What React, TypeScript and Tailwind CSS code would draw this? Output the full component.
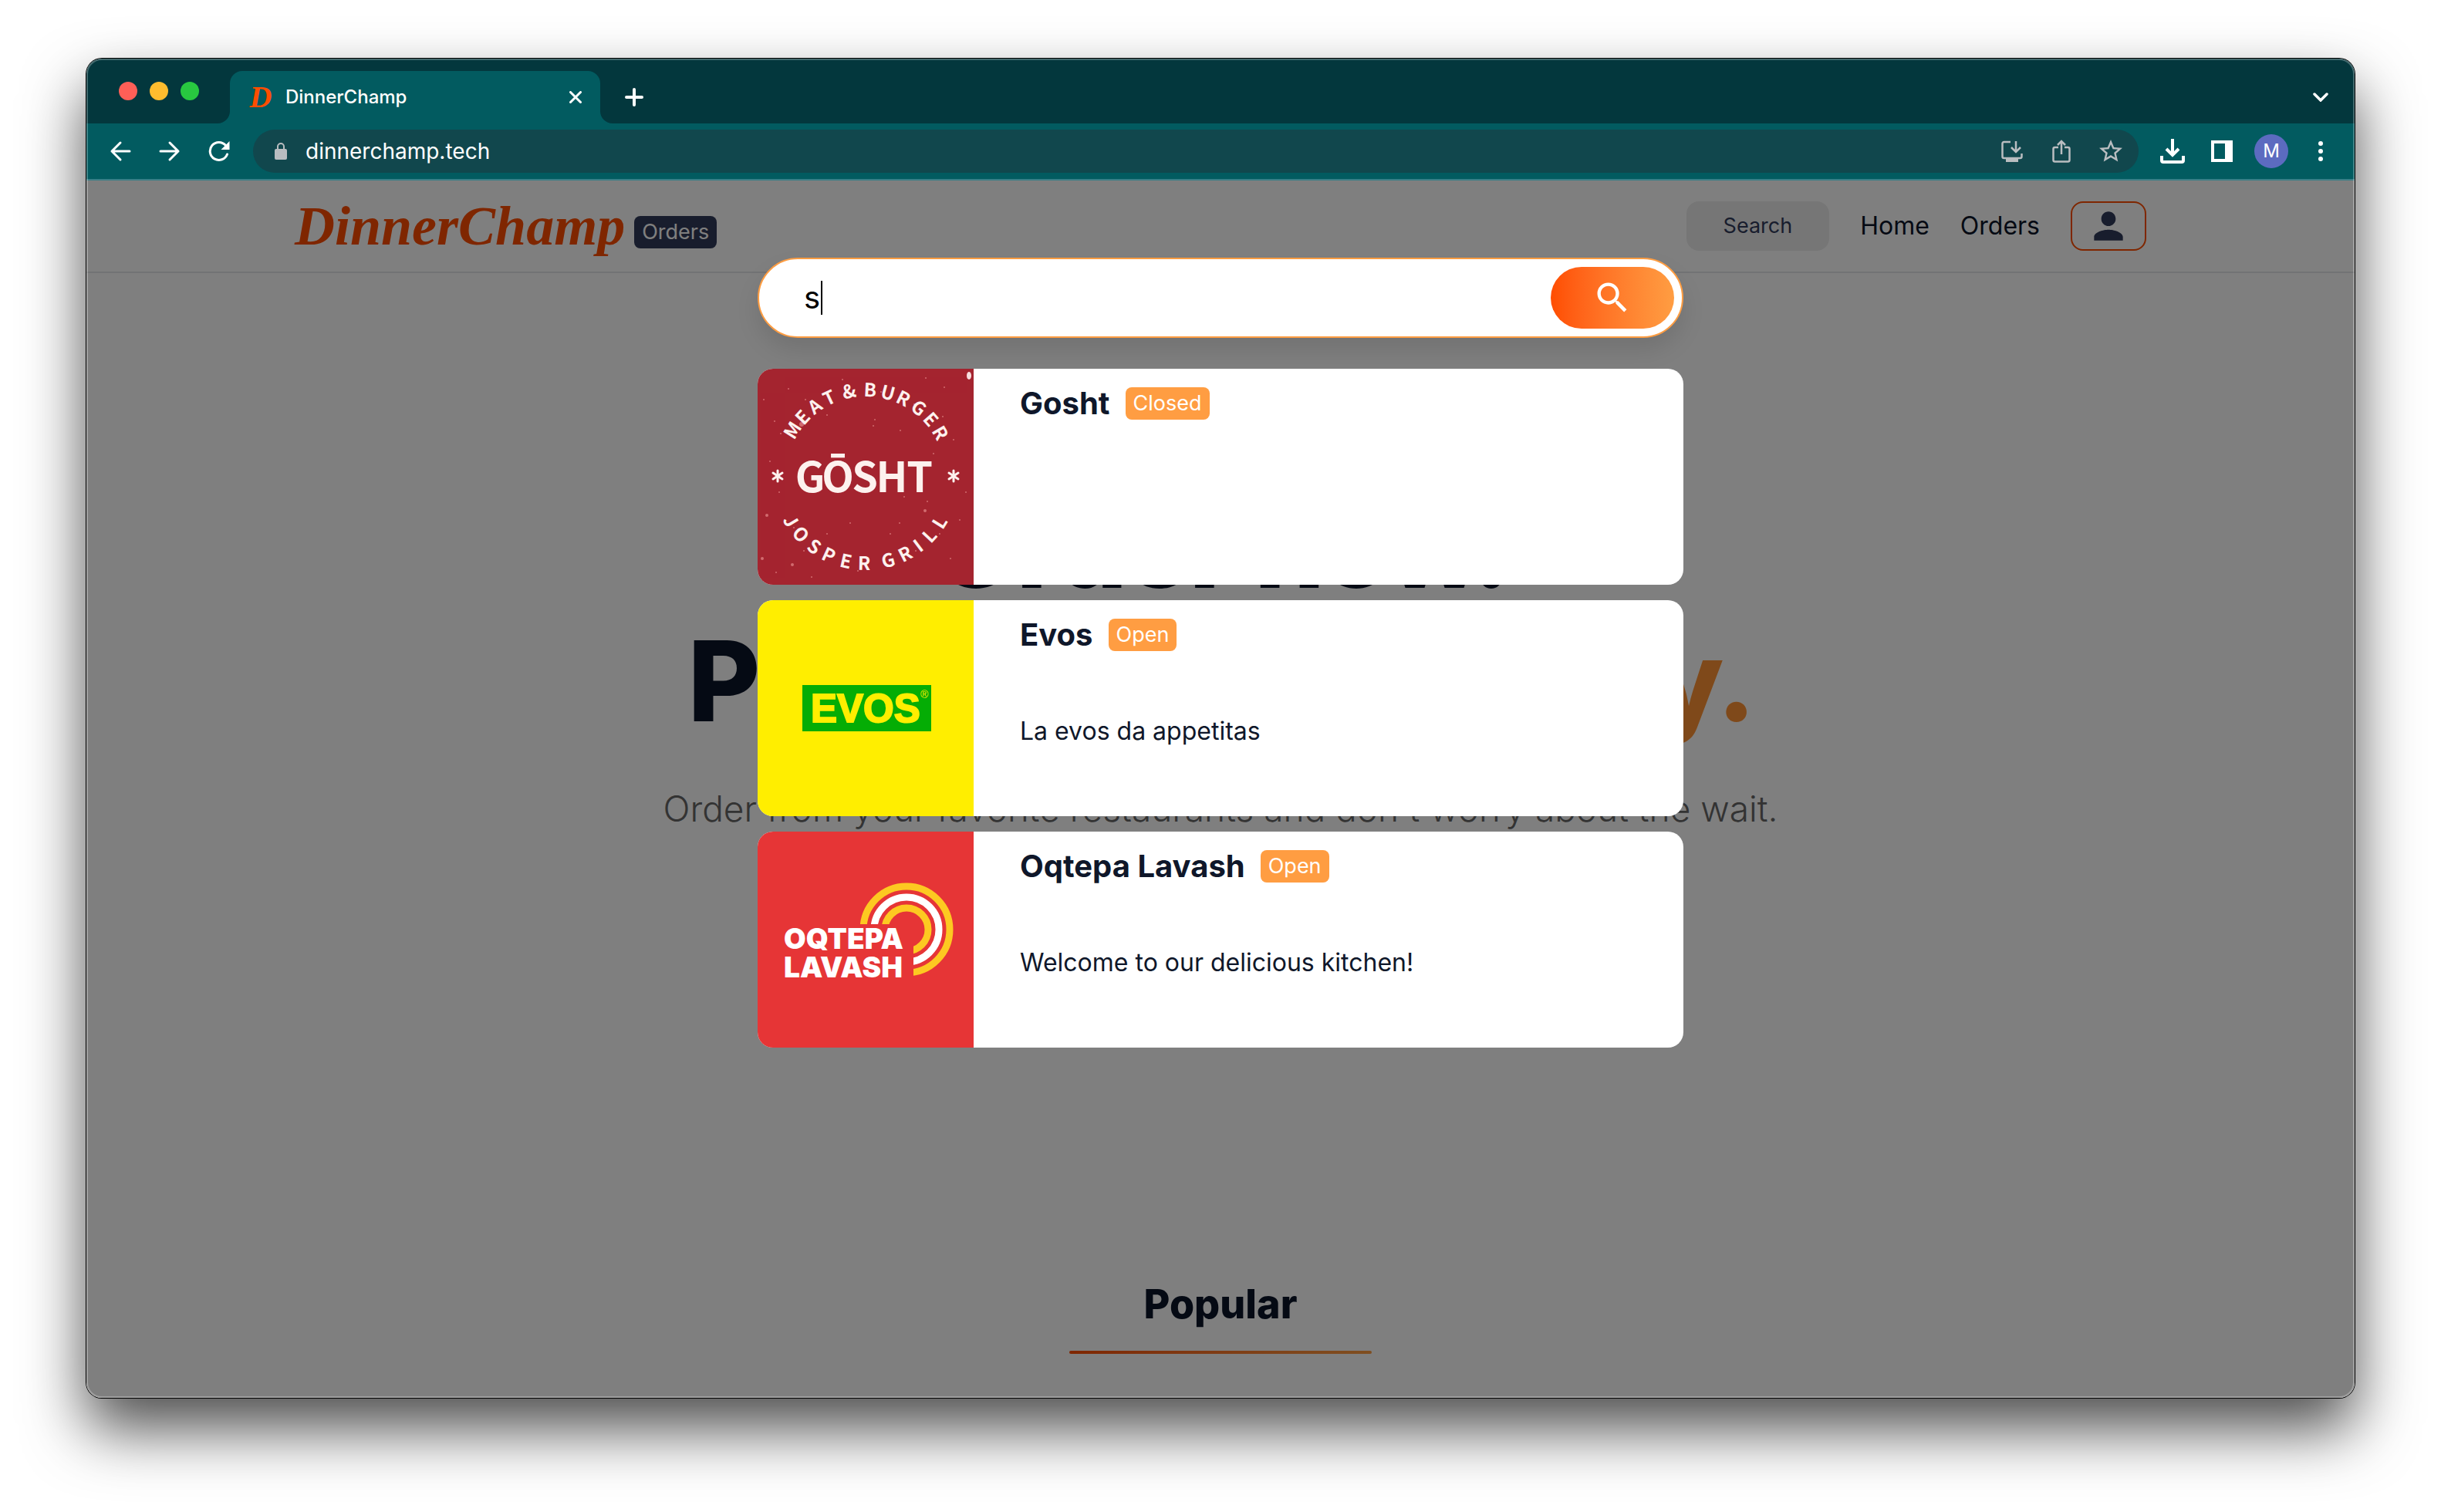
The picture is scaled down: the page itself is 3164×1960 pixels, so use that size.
import React, { useState } from "react";
import { MdSearch, MdPerson } from "react-icons/md";

type Restaurant = {
  name: string;
  status: "Open" | "Closed";
  description?: string;
  logo: React.ReactNode;
};

/* Letters set one by one round a circle; each has its angle in degrees, 0 = top of the circle. */
function CircleText({
  letters,
  cx,
  cy,
  radius,
  inward = false,
}: {
  letters: [string, number][];
  cx: number;
  cy: number;
  radius: number;
  inward?: boolean;
}) {
  return (
    <>
      {letters.map(([letter, angle]) => {
        const a = (angle * Math.PI) / 180;
        const x = cx + radius * Math.sin(a);
        const y = cy - radius * Math.cos(a);
        const turn = inward ? angle - 180 : angle;
        return (
          <text key={angle} x={x} y={y} textAnchor="middle" transform={`rotate(${turn} ${x} ${y})`}>
            {letter}
          </text>
        );
      })}
    </>
  );
}

const topLetters: [string, number][] = [
  ["M", -58], ["E", -47], ["A", -36], ["T", -25], ["&", -11], ["B", 3],
  ["U", 15], ["R", 26], ["G", 38], ["E", 49], ["R", 60],
];

const bottomLetters: [string, number][] = [
  ["J", 239], ["O", 228], ["S", 216], ["P", 205], ["E", 193], ["R", 181],
  ["G", 165], ["R", 153], ["I", 143], ["L", 133], ["L", 122],
];

const specks = [
  [40, 26, 1], [22, 68, 1], [62, 40, 1], [110, 14, 1], [90, 60, 1], [242, 24, 1], [203, 46, 1],
  [16, 120, 1], [28, 160, 1], [12, 190, 2], [47, 206, 1], [60, 236, 1], [90, 214, 1], [45, 254, 2],
  [24, 264, 1], [70, 270, 1], [130, 262, 1], [205, 236, 1], [236, 214, 1], [262, 196, 1],
  [250, 246, 1], [228, 110, 1], [254, 92, 1], [185, 80, 1], [150, 74, 1], [152, 66, 1], [6, 246, 2],
  [8, 40, 1], [270, 160, 1], [172, 214, 1], [120, 200, 1], [160, 30, 1], [218, 12, 1], [184, 200, 1],
  [57, 72, 3], [217, 184, 2], [220, 172, 1], [190, 166, 1], [240, 62, 1], [30, 84, 1],
];

function GoshtLogo() {
  const word: [string, number][] = [["G", 68], ["Ō", 104], ["S", 139], ["H", 174], ["T", 210]];
  return (
    <svg viewBox="0 0 280 280" className="size-[280px] shrink-0" role="img" aria-label="Gosht logo">
      <rect width="280" height="280" fill="#a4242f" />
      <g fill="#e58a8a" opacity="0.7">
        {specks.map(([x, y, r], i) => (
          <circle key={i} cx={x} cy={y} r={r} />
        ))}
      </g>
      <ellipse cx="274" cy="9" rx="3" ry="5" fill="#f7dede" />
      <g fill="#fdf1ee" fontFamily="'Noto Sans CJK JP', sans-serif" fontWeight="700">
        <g fontSize="24">
          <CircleText letters={topLetters} cx={140} cy={139} radius={103} />
          <CircleText letters={bottomLetters} cx={140} cy={139} radius={122} inward />
        </g>
        <g fontSize="54" textAnchor="middle">
          {word.map(([letter, x]) => (
            <text key={letter} x={x} y="160">
              {letter}
            </text>
          ))}
        </g>
      </g>
      <g stroke="#fdf1ee" strokeWidth="3" strokeLinecap="round">
        {[26, 254].map((x) => (
          <g key={x}>
            <path d={`M${x} 132v14`} />
            <path d={`M${x - 6} 135l12 8`} />
            <path d={`M${x + 6} 135l-12 8`} />
          </g>
        ))}
      </g>
    </svg>
  );
}

function EvosLogo() {
  return (
    <svg viewBox="0 0 280 280" className="size-[280px] shrink-0" role="img" aria-label="Evos logo">
      <rect width="280" height="280" fill="#ffee00" />
      <rect x="58" y="110" width="167" height="60" fill="#05ad05" />
      <text
        x="69"
        y="158"
        fontSize="51"
        fontWeight="700"
        fontFamily="'Liberation Sans', sans-serif"
        fill="#ffee00"
        stroke="#ffee00"
        strokeWidth="2"
      >
        EVOS
      </text>
      <text x="211" y="127" fontSize="14" fontFamily="'Liberation Sans', sans-serif" fill="#ffee00">
        ®
      </text>
    </svg>
  );
}

function OqtepaLogo() {
  return (
    <svg viewBox="0 0 280 280" className="size-[280px] shrink-0" role="img" aria-label="Oqtepa Lavash logo">
      <defs>
        <clipPath id="rainbow">
          <path d="M0 0H280V280H202V120H0Z" />
        </clipPath>
      </defs>
      <rect width="280" height="280" fill="#e63536" />
      <g fill="none" strokeWidth="9" clipPath="url(#rainbow)">
        <circle cx="193" cy="127" r="56" stroke="#fdc921" />
        <circle cx="193" cy="127" r="42" stroke="#ffffff" />
        <circle cx="193" cy="127" r="28" stroke="#fdc921" />
      </g>
      <g fill="#fff" fontSize="37" fontWeight="900" fontFamily="Inter, sans-serif">
        <text x="34" y="152">OQTEPA</text>
        <text x="34" y="189">LAVASH</text>
      </g>
    </svg>
  );
}

const restaurants: Restaurant[] = [
  { name: "Gosht", status: "Closed", logo: <GoshtLogo /> },
  { name: "Evos", status: "Open", description: "La evos da appetitas", logo: <EvosLogo /> },
  {
    name: "Oqtepa Lavash",
    status: "Open",
    description: "Welcome to our delicious kitchen!",
    logo: <OqtepaLogo />,
  },
];

function ToolButton({ label, children }: { label: string; children: React.ReactNode }) {
  return (
    <button type="button" aria-label={label} className="flex h-14 w-16 shrink-0 items-center justify-center">
      {children}
    </button>
  );
}

function TabStrip() {
  return (
    <div className="flex h-[84px] items-end bg-[#03373d] pr-3 pl-[42px] text-white">
      <div className="flex gap-4 self-center">
        <button type="button" aria-label="Close window" className="size-6 rounded-full bg-[#ff5f57]" />
        <button type="button" aria-label="Minimize window" className="size-6 rounded-full bg-[#febc2e]" />
        <button type="button" aria-label="Zoom window" className="size-6 rounded-full bg-[#28c840]" />
      </div>
      <div className="relative ml-10 flex h-[68px] w-[480px] items-center rounded-t-2xl bg-[#025b60] px-6">
        <svg viewBox="0 0 16 16" className="absolute bottom-0 -left-4 size-4" fill="#025b60">
          <path d="M16 0v16H0A16 16 0 0 0 16 0z" />
        </svg>
        <svg viewBox="0 0 16 16" className="absolute -right-4 bottom-0 size-4" fill="#025b60">
          <path d="M0 0v16h16A16 16 0 0 1 0 0z" />
        </svg>
        <span className="w-8 text-center font-['Liberation_Serif',serif] text-[40px] leading-8 font-bold text-[#ff4d00] italic">
          D
        </span>
        <span className="ml-4 flex-1 text-2xl font-medium">DinnerChamp</span>
        <button type="button" aria-label="Close tab">
          <svg viewBox="0 0 16 16" className="size-4" stroke="currentColor" strokeWidth="3" strokeLinecap="round">
            <path d="M1.5 1.5l13 13M14.500 1.500l-13 13" />
          </svg>
        </button>
      </div>
      <button type="button" aria-label="New tab" className="ml-8 flex h-[68px] items-center">
        <svg viewBox="0 0 24 24" className="size-6" stroke="currentColor" strokeWidth="4" strokeLinecap="round">
          <path d="M12 2v20M2 12h20" />
        </svg>
      </button>
      <button type="button" aria-label="Search tabs" className="ml-auto flex h-[68px] w-16 items-center justify-center">
        <svg viewBox="0 0 20 12" className="h-3 w-5" fill="none" stroke="currentColor" strokeWidth="3.500" strokeLinecap="round">
          <path d="M2 2l8 8 8-8" />
        </svg>
      </button>
    </div>
  );
}

function Toolbar() {
  return (
    <div className="flex h-[74px] items-center border-b-2 border-[#3a7f87] bg-[#025b60] px-3 text-white">
      <ToolButton label="Back">
        <svg viewBox="0 0 28 28" className="size-7" fill="none" stroke="currentColor" strokeWidth="3" strokeLinecap="round" strokeLinejoin="round">
          <path d="M26 14H3M14 3L3 14l11 11" />
        </svg>
      </ToolButton>
      <ToolButton label="Forward">
        <svg viewBox="0 0 28 28" className="size-7" fill="none" stroke="currentColor" strokeWidth="3" strokeLinecap="round" strokeLinejoin="round">
          <path d="M2 14h23M14 3l11 11-11 11" />
        </svg>
      </ToolButton>
      <ToolButton label="Reload">
        <svg viewBox="0 0 28 28" className="size-7">
          <path d="M24.500 18A11.500 11.500 0 1 1 22.500 6.500" fill="none" stroke="currentColor" strokeWidth="3" strokeLinecap="round" />
          <path d="M27.500 1v11h-11z" fill="currentColor" />
        </svg>
      </ToolButton>
      <div className="ml-3 flex h-14 flex-1 items-center rounded-full bg-[#11474d] pr-1 pl-7 text-[#b9bdc0]">
        <svg viewBox="0 0 16 22" className="h-[22px] w-4" fill="none">
          <path d="M4 9V5a4 4 0 0 1 8 0v4" stroke="currentColor" strokeWidth="2" />
          <rect y="8" width="16" height="14" rx="2" fill="currentColor" />
        </svg>
        <input
          aria-label="Address"
          defaultValue="dinnerchamp.tech"
          className="ml-6 min-w-0 flex-1 bg-transparent text-[28px] text-white outline-none"
        />
        <ToolButton label="Install app">
          <svg viewBox="0 0 28 28" className="size-7" fill="none" stroke="currentColor" strokeWidth="2.500">
            <path d="M12 2H3.500A2 2 0 0 0 1.500 4v17a2 2 0 0 0 2 2h21a2 2 0 0 0 2-2v-4" />
            <path d="M19 1v13M13 9l6 6 6-6" />
            <path d="M6 26h16" strokeWidth="4" />
          </svg>
        </ToolButton>
        <ToolButton label="Share">
          <svg viewBox="0 0 24 30" className="h-[30px] w-6" fill="none" stroke="currentColor" strokeWidth="2.500">
            <path d="M8 10H3.500a2 2 0 0 0-2 2v14.500a2 2 0 0 0 2 2h17a2 2 0 0 0 2-2V12a2 2 0 0 0-2-2H16" />
            <path d="M12 19V2M7 7l5-5 5 5" />
          </svg>
        </ToolButton>
        <ToolButton label="Bookmark">
          <svg viewBox="0 0 24 24" className="size-9" fill="currentColor">
            <path d="M22 9.240l-7.190-.620L12 2 9.190 8.630 2 9.240l5.460 4.730L5.820 21 12 17.270 18.180 21l-1.630-7.030L22 9.240zM12 15.400l-3.760 2.270 1-4.280-3.320-2.880 4.380-.380L12 6.100l1.710 4.040 4.380.380-3.320 2.880 1 4.280L12 15.400z" />
          </svg>
        </ToolButton>
      </div>
      <div className="ml-3 flex items-center">
        <ToolButton label="Downloads">
          <svg viewBox="0 0 32 32" className="size-8" fill="none" stroke="currentColor" strokeWidth="4">
            <path d="M16 0v21M8 13l8 8 8-8" />
            <path d="M2 22v6a2 2 0 0 0 2 2h24a2 2 0 0 0 2-2v-6" />
          </svg>
        </ToolButton>
        <ToolButton label="Side panel">
          <svg viewBox="0 0 28 28" className="size-7" fill="none">
            <rect x="2" y="2" width="24" height="24" stroke="currentColor" strokeWidth="4" />
            <rect x="18" y="2" width="8" height="24" fill="currentColor" />
          </svg>
        </ToolButton>
        <ToolButton label="Profile">
          <span className="flex size-11 items-center justify-center rounded-full bg-[#5c6bc0] text-2xl">M</span>
        </ToolButton>
        <ToolButton label="Menu">
          <svg viewBox="0 0 8 28" className="h-7 w-2" fill="currentColor">
            <circle cx="4" cy="4" r="3" />
            <circle cx="4" cy="14" r="3" />
            <circle cx="4" cy="24" r="3" />
          </svg>
        </ToolButton>
      </div>
    </div>
  );
}

function SiteHeader() {
  return (
    <header className="border-b-2 border-gray-200">
      <div className="mx-auto flex h-[118px] max-w-[2400px] items-center justify-between">
        <a href="#home" className="flex items-center gap-3">
          <span className="font-['Liberation_Serif',serif] text-[72px] leading-none font-bold text-[#ff4d00] italic">
            DinnerChamp
          </span>
          <span className="mt-4 flex h-[42px] items-center rounded-lg bg-[#313a5a] px-2.5 text-[27px] text-white">
            Orders
          </span>
        </a>
        <nav className="flex items-center gap-10 text-[32px] text-[#0b1428]">
          <button type="button" className="h-16 rounded-2xl bg-[#ededed] px-12 text-[27px] text-[#313a5a]">
            Search
          </button>
          <a href="#home">Home</a>
          <a href="#orders">Orders</a>
          <button
            type="button"
            aria-label="Account"
            className="flex h-16 w-[98px] items-center justify-center rounded-2xl border-2 border-[#ff4d00] text-[#313a5a]"
          >
            <MdPerson className="size-14" />
          </button>
        </nav>
      </div>
    </header>
  );
}

function ResultCard({ restaurant }: { restaurant: Restaurant }) {
  return (
    <li className="flex h-[280px] overflow-hidden rounded-[20px] bg-white text-[#0f172a]">
      {restaurant.logo}
      <div className="px-[60px] py-[21px]">
        <div className="flex items-center gap-5">
          <h2 className="text-[40px] leading-[48px] font-bold">{restaurant.name}</h2>
          <span className="flex h-[42px] items-center rounded-lg bg-[#ff9d42] px-2.5 text-[27px] text-white">
            {restaurant.status}
          </span>
        </div>
        {restaurant.description && <p className="mt-[77px] text-[32px] leading-[48px]">{restaurant.description}</p>}
      </div>
    </li>
  );
}

function SearchDialog() {
  const [query, setQuery] = useState("s");
  return (
    <div role="dialog" aria-label="Search restaurants" className="absolute inset-0 bg-black/50 pt-[100px]">
      <div className="mx-auto w-[1200px] max-w-full">
        <form
          role="search"
          onSubmit={(e) => e.preventDefault()}
          className="relative flex h-[104px] items-center rounded-full border-2 border-[#ff9d42] bg-white pr-2.5 pl-[58px] shadow-[0_16px_30px_rgba(0,0,0,0.1)]"
        >
          <input
            aria-label="Search"
            value={query}
            onChange={(e) => setQuery(e.target.value)}
            className="min-w-0 flex-1 bg-transparent text-[40px] text-black caret-transparent outline-none"
          />
          <span className="pointer-events-none absolute top-7 left-20 h-11 w-0.5 bg-black" />
          <button
            type="submit"
            aria-label="Search"
            className="flex h-20 w-40 items-center justify-center rounded-full bg-linear-to-r from-[#ff4d00] to-[#ff9d42] text-white"
          >
            <MdSearch className="size-[52px]" />
          </button>
        </form>
        <ul className="mt-10 flex flex-col gap-5">
          {restaurants.map((r) => (
            <ResultCard key={r.name} restaurant={r} />
          ))}
        </ul>
      </div>
    </div>
  );
}

export default function App() {
  return (
    <div className="flex min-h-screen flex-col bg-white px-28 pt-[76px] pb-[148px] font-[Inter,sans-serif]">
      <div className="relative flex flex-1 flex-col overflow-hidden rounded-[20px] shadow-[0_0_0_1px_#000,0_40px_80px_rgba(0,0,0,0.7)]">
        <TabStrip />
        <Toolbar />
        <div className="relative flex-1 bg-white">
          <SiteHeader />
          <main className="text-center text-[#0b1428]">
            <h1 className="pt-[269px] text-[144px] leading-[173px] font-extrabold tracking-tight">
              Order now.
              <br />
              Pickup <span className="text-[#ff9334]">immediately.</span>
            </h1>
            <p className="mt-[50px] text-[46px] leading-[58px] font-light text-[#666]">
              Order from your favorite restaurants and don't worry about the wait.
            </p>
            <h2 className="mt-[582px] text-[52px] leading-[64px] font-extrabold">Popular</h2>
            <div className="mx-auto mt-7 h-1 w-[392px] rounded-full bg-linear-to-r from-[#ff4d00] to-[#ff9d42]" />
          </main>
          <SearchDialog />
        </div>
        <div className="pointer-events-none absolute inset-0 rounded-[20px] border-2 border-white/25" />
      </div>
    </div>
  );
}
